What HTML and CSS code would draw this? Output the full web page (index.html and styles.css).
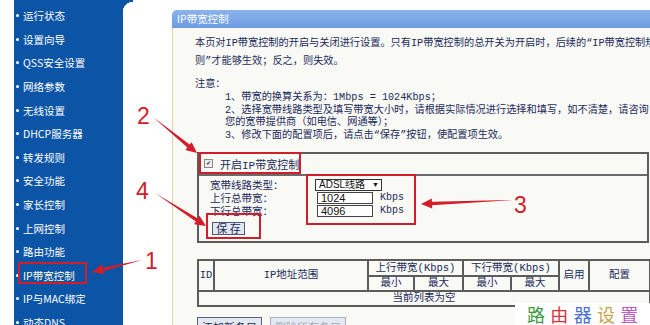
FILE: index.html
```html
<!DOCTYPE html>
<html lang="zh-CN">
<head>
  <meta charset="UTF-8">
  <meta name="viewport" content="width=device-width, initial-scale=1.0">
  <title>IP带宽控制</title>
  <link rel="stylesheet" href="styles.css">
</head>
<body>
  <div class="page">
    <ul class="menu">
      <li>运行状态</li>
      <li>设置向导</li>
      <li>QSS安全设置</li>
      <li>网络参数</li>
      <li>无线设置</li>
      <li>DHCP服务器</li>
      <li>转发规则</li>
      <li>安全功能</li>
      <li>家长控制</li>
      <li>上网控制</li>
      <li>路由功能</li>
      <li class="active">IP带宽控制</li>
      <li>IP与MAC绑定</li>
      <li>动态DNS</li>
    </ul>

    <div class="main">
      <div class="panel">
        <div class="panel-title">IP带宽控制</div>
        <div class="panel-body">
          <p class="intro">本页对IP带宽控制的开启与关闭进行设置。只有IP带宽控制的总开关为开启时，后续的“IP带宽控制规<br>则”才能够生效；反之，则失效。</p>
          <p class="note-head">注意：</p>
          <ol class="notes">
            <li>1、带宽的换算关系为：1Mbps = 1024Kbps；</li>
            <li>2、选择宽带线路类型及填写带宽大小时，请根据实际情况进行选择和填写，如不清楚，请咨询<br>您的宽带提供商（如电信、网通等）；</li>
            <li>3、修改下面的配置项后，请点击“保存”按钮，使配置项生效。</li>
          </ol>

          <div class="config">
            <div class="check-row">
              <span class="checkbox">✔</span>
              <span class="check-label">开启IP带宽控制</span>
            </div>
            <div class="fields">
              <span class="label">宽带线路类型：</span>
              <div class="select">ADSL线路<span class="caret">▼</span></div>
              <span></span>
              <span class="label">上行总带宽：</span>
              <input class="num" type="text" value="1024">
              <span class="unit">Kbps</span>
              <span class="label">下行总带宽：</span>
              <input class="num" type="text" value="4096">
              <span class="unit">Kbps</span>
            </div>
            <div class="save-row">
              <button class="btn-save">保 存</button>
            </div>
          </div>

          <table class="rules">
            <colgroup>
              <col style="width:16px">
              <col style="width:154px">
              <col style="width:46px">
              <col style="width:49px">
              <col style="width:48px">
              <col style="width:48px">
              <col style="width:30px">
              <col style="width:61px">
            </colgroup>
            <tr class="head1">
              <td rowspan="2">ID</td>
              <td rowspan="2">IP地址范围</td>
              <td colspan="2">上行带宽(Kbps)</td>
              <td colspan="2">下行带宽(Kbps)</td>
              <td rowspan="2">启用</td>
              <td rowspan="2">配置</td>
            </tr>
            <tr class="head2">
              <td>最小</td>
              <td>最大</td>
              <td>最小</td>
              <td>最大</td>
            </tr>
            <tr class="empty">
              <td colspan="8">当前列表为空</td>
            </tr>
          </table>

          <div class="actions">
            <button class="btn">添加新条目</button>
            <button class="btn" disabled>删除所有条目</button>
          </div>
        </div>
      </div>
    </div>
  </div>

  <!-- red annotation marks drawn over the screenshot -->
  <svg class="marks" width="650" height="325" viewBox="0 0 650 325">
    <g fill="none" stroke="#d21d2a" stroke-width="2">
      <rect x="19" y="263" width="67" height="20"/>
      <rect x="200" y="153" width="100" height="20"/>
      <rect x="307" y="175" width="108" height="49"/>
      <rect x="207" y="214" width="53" height="24"/>
    </g>
    <g fill="#d21d2a">
      <polygon points="142,260 102.3,267.7 101.5,264.6 92,272 103.9,274.3 103.1,271.2"/>
      <polygon points="153,117 187.4,147.4 185.3,149.9 197,153 191.7,142.2 189.6,144.6"/>
      <polygon points="513,200 431.9,201.7 431.8,198.5 421,204 432.2,208.5 432.1,205.3"/>
      <polygon points="155,193 195.8,221.5 194.1,224.2 206,226 199.5,215.8 197.8,218.5"/>
    </g>
    <g class="mark-num" fill="#d21d2a">
      <text x="145" y="269">1</text>
      <text x="137" y="124">2</text>
      <text x="514" y="213">3</text>
      <text x="136" y="199">4</text>
    </g>
  </svg>

  <div class="watermark"><span class="c1">路</span><span class="c2">由</span><span class="c3">器</span><span class="c4">设</span><span class="c5">置</span></div>
</body>
</html>
```

FILE: styles.css
```css
body {
  margin: 0;
  width: 650px;
  height: 325px;
  overflow: hidden;
  position: relative;
  background-color: #fff;
  font-family: "Noto Sans CJK SC", sans-serif;
}

.page {
  display: flex;
  align-items: flex-start;
}

/* left menu */
.menu {
  flex: none;
  position: relative;
  list-style: none;
  margin: 0 0 0 14px;
  padding: 4px 0 0 2px;
  width: 107px;
  height: 340px;
  background-color: #0c54a6;
}

.menu::after {
  content: "";
  position: absolute;
  left: 100%;
  top: 0;
  width: 10px;
  height: 12px;
  background: radial-gradient(circle at 100% 100%, transparent 10px, #0c54a6 10.5px);
}

.menu li {
  display: flex;
  align-items: center;
  gap: 4px;
  height: 23.6px;
  font-size: 10.5px;
  color: #fff;
  white-space: nowrap;
}

.menu li::before {
  content: "";
  width: 3px;
  height: 3px;
  border-radius: 50%;
  background-color: #fff;
}

.menu li.active {
  color: #fffbe0;
}

/* content panel */
.main {
  flex: 1;
  min-width: 0;
  padding: 10px 0 0 49px;
}

.panel {
  width: 490px;
}

.panel-title {
  height: 18px;
  line-height: 18px;
  padding-left: 5px;
  font-size: 10.5px;
  color: #fff;
  background: linear-gradient(#8cb3eb, #6c9ce0);
  border-radius: 5px 0 0 0;
}

.panel-body {
  height: 310px;
  padding: 7px 0 0 22px;
  border-left: 1px solid #e2d3ad;
  background-color: #f9f9f5;
  color: #1b2b5b;
  font-family: "Liberation Mono", "Noto Sans CJK SC", monospace;
  font-size: 10.2px;
}

.intro {
  margin: 0;
  line-height: 18px;
  white-space: nowrap;
}

.note-head {
  margin: 7px 0 0;
  line-height: 13px;
}

.notes {
  list-style: none;
  margin: 1px 0 0;
  padding-left: 30px;
  line-height: 12.6px;
  white-space: nowrap;
}

/* settings box */
.config {
  box-sizing: border-box;
  width: 452px;
  margin: 9.5px 0 0 2px;
  border: 2px solid #5c5c5c;
}

.check-row {
  display: flex;
  align-items: center;
  gap: 7px;
  height: 20px;
  padding-left: 5px;
  border-bottom: 2px solid #6b6b6b;
}

.checkbox {
  box-sizing: border-box;
  width: 9px;
  height: 9px;
  border: 1px solid #8a8a8a;
  background-color: #eeeeee;
  color: #333;
  font-size: 7px;
  line-height: 7px;
  text-align: center;
}

.check-label {
  font-size: 11px;
}

.fields {
  display: grid;
  grid-template-columns: 105px 65px auto;
  grid-auto-rows: 13px;
  align-items: center;
  padding: 3px 0 0 11px;
  font-size: 10.5px;
  line-height: 12px;
}

.label {
  font-family: "Noto Sans CJK SC", sans-serif;
}

.select {
  box-sizing: border-box;
  display: flex;
  align-items: center;
  justify-content: space-between;
  width: 67px;
  height: 12px;
  padding: 0 2px 0 3px;
  border: 1px solid #333;
  background-color: #fff;
  color: #111;
  font-family: "Liberation Sans", "Noto Sans CJK SC", sans-serif;
  font-size: 10px;
  line-height: 10px;
}

.caret {
  font-size: 7px;
}

.num {
  box-sizing: border-box;
  width: 56px;
  height: 12px;
  margin: 0 0 0 2px;
  padding: 0 3px;
  border: 1px solid #444;
  background-color: #fff;
  color: #111;
  font-family: "Liberation Sans", sans-serif;
  font-size: 11px;
  line-height: 10px;
}

.unit {
  font-size: 10px;
}

.save-row {
  padding: 4px 0 6px 13px;
}

.btn-save {
  display: block;
  box-sizing: border-box;
  width: 33px;
  height: 13px;
  padding: 0;
  border: 1px solid #4a5a7a;
  background-color: #e3e7ef;
  color: #1b2b5b;
  font-family: "Noto Sans CJK SC", sans-serif;
  font-size: 11px;
  line-height: 10px;
}

/* rule table */
.rules {
  table-layout: fixed;
  width: 452px;
  margin: 16px 0 0 2px;
  border-collapse: collapse;
  border: 2px solid #5c5c5c;
  text-align: center;
  font-size: 10.5px;
}

.rules td {
  padding: 0;
  border: 2px solid #5c5c5c;
  line-height: 12px;
  white-space: nowrap;
}

.rules .head1 td {
  height: 14px;
}

.rules .head2 td,
.rules .empty td {
  height: 13px;
}

.actions {
  display: flex;
  gap: 8px;
  margin: 10px 0 0 2px;
}

.btn {
  box-sizing: border-box;
  height: 20px;
  padding: 0 4px;
  border: 1px solid #59627a;
  background-color: #e4e8f0;
  color: #1b2b5b;
  font-family: "Noto Sans CJK SC", sans-serif;
  font-size: 11px;
}

.btn:disabled {
  border-color: #a8b0c0;
  color: #a0a8b8;
}

/* overlays */
.marks {
  position: absolute;
  left: 0;
  top: 0;
  pointer-events: none;
}

.mark-num {
  font-family: "Liberation Sans", sans-serif;
  font-size: 23px;
}

.watermark {
  position: absolute;
  right: 0;
  bottom: 0;
  width: 123px;
  height: 22px;
  padding-left: 12px;
  background-color: #fff;
  font-size: 18px;
  line-height: 22px;
  letter-spacing: 5.3px;
  white-space: nowrap;
}

.c1 { color: #3f9a3f; }
.c2 { color: #d8323a; }
.c3 { color: #4a6fd0; }
.c4 { color: #c8a24a; }
.c5 { color: #c05cc8; }
```
